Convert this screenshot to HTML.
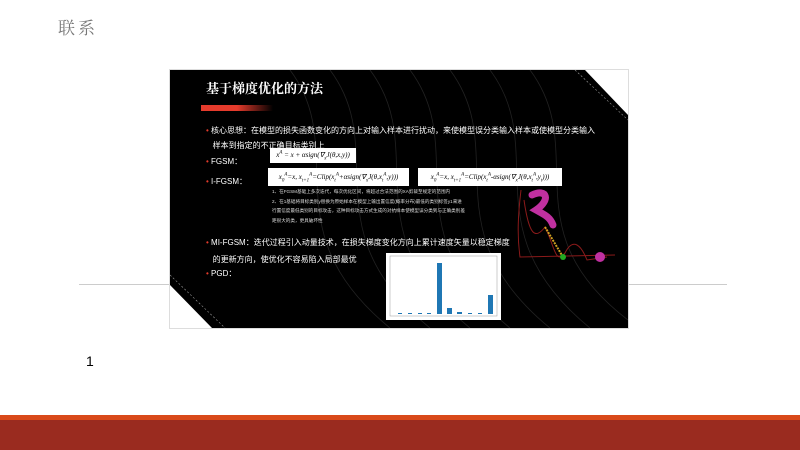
<!DOCTYPE html>
<html><head><meta charset="utf-8"><style>
body{margin:0;width:800px;height:450px;background:#fff;position:relative;overflow:hidden;font-family:"Liberation Sans","Noto Sans CJK SC",sans-serif}
.a{position:absolute}
.t{color:#fff;font-size:8px;white-space:nowrap}
.dot{color:#e53b2c}
.f{background:#fff;color:#000;font-family:"Liberation Serif",serif;font-style:italic;font-size:7px;text-align:center;overflow:hidden;white-space:nowrap}
.f sup,.f sub{line-height:0;font-size:5px}
.s{color:#ddd;font-size:4.6px;white-space:nowrap}
</style></head><body>
<div class="a" style="left:58px;top:14px;font-size:17px;color:#777;font-family:'Noto Serif CJK SC',serif;letter-spacing:3px">联系</div>
<div class="a" style="left:79px;top:284px;width:648px;height:1px;background:#ccc"></div>
<div class="a" style="left:169px;top:69px;width:460px;height:260px;background:#ddd"></div>
<div class="a" style="left:170px;top:70px;width:458px;height:258px;background:#000;overflow:hidden">
 <svg class="a" style="left:0;top:0" width="458" height="258">
  <g fill="none" stroke="#222" stroke-width="0.8">
   <path d="M200 0 C260 80 180 160 300 258"/><path d="M240 0 C300 80 220 160 340 258"/><path d="M280 0 C340 80 260 160 380 258"/><path d="M320 0 C380 80 300 160 420 258"/><path d="M360 0 C420 80 340 160 458 250"/><path d="M160 0 C220 80 140 160 260 258"/><path d="M120 0 C180 80 100 160 220 258"/>
  </g>
  <polygon points="415,0 458,0 458,45" fill="#fff"/>
  <polygon points="0,215 0,258 42,258" fill="#fff"/>
  <line x1="405" y1="0" x2="458" y2="50" stroke="#999" stroke-dasharray="2,2" stroke-width=".6"/>
  <line x1="0" y1="205" x2="55" y2="258" stroke="#999" stroke-dasharray="2,2" stroke-width=".6"/>
 </svg>
 <div class="a" style="left:36px;top:8px;color:#fff;font-size:13px;font-weight:bold;font-family:'Noto Serif CJK SC',serif">基于梯度优化的方法</div>
 <div class="a" style="left:31px;top:35px;width:72px;height:6px;background:linear-gradient(90deg,#e53b2c,#e53b2c 50%,#000)"></div>
 <div class="a t" style="left:36px;top:53px;line-height:15px"><span class="dot">•</span> 核心思想：在模型的损失函数变化的方向上对输入样本进行扰动，来使模型误分类输入样本或使模型分类输入<br>&nbsp;&nbsp;&nbsp;样本到指定的不正确目标类别上</div>
 <div class="a t" style="left:36px;top:86px"><span class="dot">•</span> FGSM：</div>
 <div class="a f" style="left:100px;top:78px;width:86px;height:15px;line-height:15px">x<sup>A</sup> = x + αsign(∇<sub>x</sub>J(θ,x,y))</div>
 <div class="a t" style="left:36px;top:106px"><span class="dot">•</span> I-FGSM：</div>
 <div class="a f" style="left:98px;top:98px;width:141px;height:18px;line-height:18px">x<sub>0</sub><sup>A</sup>=x, x<sub>t+1</sub><sup>A</sup>=Clip(x<sub>t</sub><sup>A</sup>+αsign(∇<sub>x</sub>J(θ,x<sub>t</sub><sup>A</sup>,y)))</div>
 <div class="a f" style="left:248px;top:98px;width:144px;height:18px;line-height:18px">x<sub>0</sub><sup>A</sup>=x, x<sub>t+1</sub><sup>A</sup>=Clip(x<sub>t</sub><sup>A</sup>-αsign(∇<sub>x</sub>J(θ,x<sub>t</sub><sup>A</sup>,y<sub>t</sub>)))</div>
 <div class="a s" style="left:102px;top:117px;line-height:9.5px">1、在FGSM基础上多次迭代，每次优化区间，将超过合法范围的XA剪裁至规定的范围内<br>2、在1基础将目标类别y替换为原始样本在模型上输出置信度(概率分布)最低的类别标签y1来进<br>行置信度最低类别的目标攻击，这种目标攻击方式生成的对抗样本使模型误分类到与正确类别差<br>距很大的类，更具破坏性</div>
 <div class="a t" style="left:36px;top:164px;line-height:17px"><span class="dot">•</span> MI-FGSM：迭代过程引入动量技术，在损失梯度变化方向上累计速度矢量以稳定梯度<br>&nbsp;&nbsp;&nbsp;的更新方向，使优化不容易陷入局部最优</div>
 <div class="a t" style="left:36px;top:198px"><span class="dot">•</span> PGD：</div>
 <div class="a" style="left:216px;top:183px;width:115px;height:67px;background:#fff">
  <svg width="115" height="67"><rect x="4" y="3" width="107" height="60" fill="none" stroke="#999" stroke-width=".5"/>
   <g fill="#1f77b4"><rect x="51" y="10" width="5" height="51"/><rect x="61" y="55" width="5" height="6"/><rect x="71" y="59" width="5" height="2"/><rect x="82" y="60" width="4" height="1"/><rect x="92" y="60" width="4" height="1"/><rect x="102" y="42" width="5" height="19"/><rect x="12" y="60" width="4" height="1"/><rect x="22" y="60" width="4" height="1"/><rect x="32" y="60" width="4" height="1"/><rect x="41" y="60" width="4" height="1"/></g></svg>
 </div>
 <svg class="a" style="left:345px;top:115px" width="100" height="80">
  <path d="M6 5 C3 30 2 50 5 72 L100 70" stroke="#8b1a1a" fill="none" stroke-width="1"/>
  <path d="M9 15 C14 50 20 55 30 42 C40 62 40 80 50 68 C58 52 66 60 72 75 L92 72" stroke="#8b1a1a" fill="none" stroke-width="1"/>
  <path d="M17 10 C32 3 36 15 21 25 C30 30 35 32 38 40" stroke="#c030a0" fill="none" stroke-width="7" stroke-linecap="round"/>
  <path d="M30 42 L48 72" stroke="#d0a020" stroke-dasharray="2,1" stroke-width="2"/>
  <circle cx="48" cy="72" r="3" fill="#2a2"/>
  <circle cx="85" cy="72" r="5" fill="#c030a0"/>
 </svg>
</div>
<div class="a" style="left:86px;top:353px;font-size:14px;color:#000">1</div>
<div class="a" style="left:0;top:415px;width:800px;height:5px;background:#d9491a"></div>
<div class="a" style="left:0;top:420px;width:800px;height:30px;background:#9a2b1f"></div>
</body></html>
